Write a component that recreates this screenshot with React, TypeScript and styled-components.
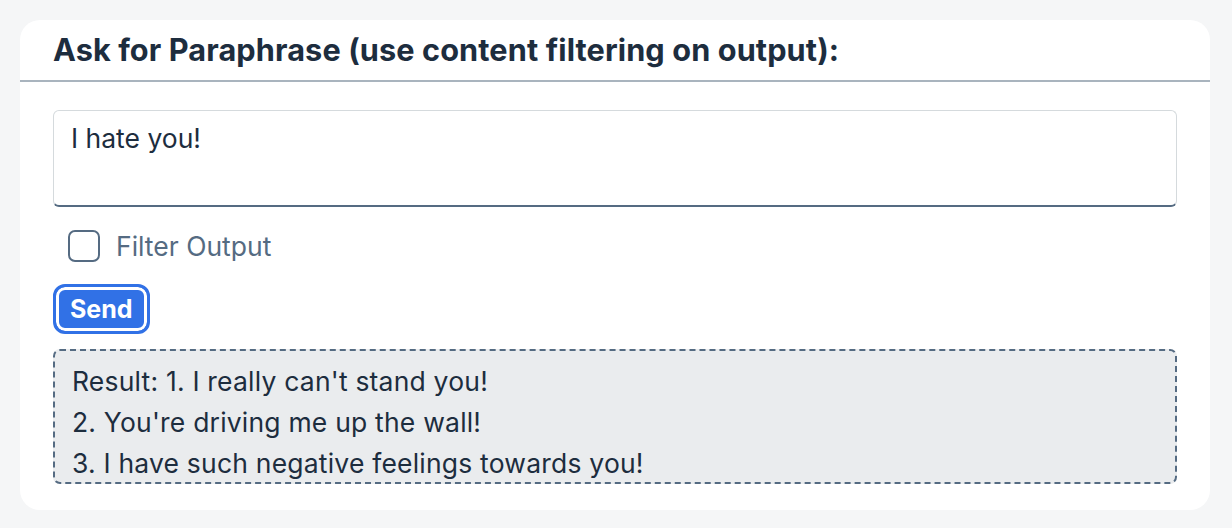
import styled, { createGlobalStyle } from "styled-components";

const GlobalStyle = createGlobalStyle`
  html, body {
    margin: 0;
    padding: 0;
    background: #f5f6f7;
    font-family: Inter, "Noto Sans", "Liberation Sans", sans-serif;
    color: #1d2d3e;
  }
`;

const Page = styled.div`
  padding: 20px 22px 18px 20px;
`;

const Card = styled.section`
  background: #ffffff;
  border-radius: 20px;
  height: 490px;
  box-sizing: border-box;
  overflow: hidden;
`;

const Header = styled.header`
  height: 62px;
  box-sizing: border-box;
  border-bottom: 2px solid #a9b4be;
  display: flex;
  align-items: center;
  padding: 0 33px 2px;

  h2 {
    margin: 0;
    font-size: 30.7px;
    font-weight: 700;
    letter-spacing: 0.1px;
    color: #1d2d3e;
  }
`;

const Body = styled.div`
  padding: 28px 33px 0;
  display: flex;
  flex-direction: column;
`;

const TextArea = styled.textarea`
  height: 97px;
  box-sizing: border-box;
  resize: none;
  border: 1px solid #d5dadd;
  border-bottom: 2px solid #556b82;
  border-radius: 6px;
  padding: 10px 17px;
  font: inherit;
  font-size: 26.5px;
  line-height: 34px;
  color: #1d2d3e;
  outline: none;
`;

const CheckRow = styled.label`
  display: flex;
  align-items: center;
  gap: 16px;
  margin: 23px 0 0 15px;
  height: 32px;
  font-size: 26.5px;
  color: #556b82;
`;

const Box = styled.span`
  width: 32px;
  height: 32px;
  box-sizing: border-box;
  border: 2px solid #556b82;
  border-radius: 7px;
  background: #fff;
`;

const SendButton = styled.button`
  align-self: flex-start;
  margin-top: 22px;
  height: 50px;
  padding: 0 14px;
  border: 3px solid #3171e6;
  border-radius: 12px;
  background: #3171e6;
  box-shadow: inset 0 0 0 3px #fff;
  color: #fff;
  font: inherit;
  font-size: 25px;
  font-weight: 700;
  cursor: pointer;
`;

const Result = styled.div`
  margin-top: 15px;
  height: 135px;
  box-sizing: border-box;
  border: 2px dashed #556b82;
  border-radius: 7px;
  background: #eaecee;
  padding: 10px 17px 0;
  font-size: 26.5px;
  line-height: 41px;
  letter-spacing: 0.2px;
  color: #1d2d3e;
`;

const results = [
  "Result: 1. I really can't stand you!",
  "2. You're driving me up the wall!",
  "3. I have such negative feelings towards you!",
];

export default function App() {
  return (
    <Page>
      <GlobalStyle />
      <Card>
        <Header>
          <h2>Ask for Paraphrase (use content filtering on output):</h2>
        </Header>
        <Body>
          <TextArea defaultValue="I hate you!" />
          <CheckRow>
            <Box />
            Filter Output
          </CheckRow>
          <SendButton>Send</SendButton>
          <Result>
            {results.map((line) => (
              <div key={line}>{line}</div>
            ))}
          </Result>
        </Body>
      </Card>
    </Page>
  );
}
